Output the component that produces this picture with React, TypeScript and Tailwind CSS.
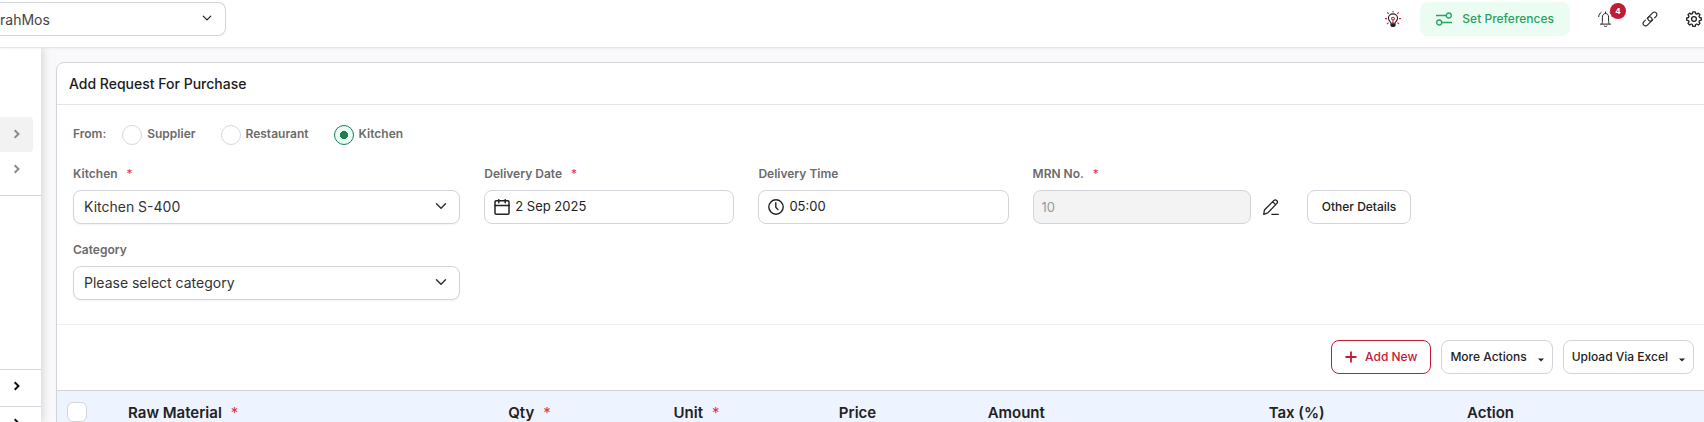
import type { ReactNode } from 'react';

const radios = [
  { id: 'supplier', label: 'Supplier' },
  { id: 'restaurant', label: 'Restaurant' },
  { id: 'kitchen', label: 'Kitchen' },
];

const columns = [
  { label: 'Raw Material', required: true, width: 'w-[23%]' },
  { label: 'Qty', required: true, width: 'w-[10%]' },
  { label: 'Unit', required: true, width: 'w-[10%]' },
  { label: 'Price', required: false, width: 'w-[9%]' },
  { label: 'Amount', required: false, width: 'w-[17%]' },
  { label: 'Tax (%)', required: false, width: 'w-[12%]' },
  { label: 'Action', required: false, width: '' },
];

function Chevron({ className }: { className: string }) {
  return (
    <svg
      className={className}
      viewBox="0 0 16 16"
      fill="none"
      stroke="currentColor"
      strokeWidth={2}
      strokeLinecap="round"
      strokeLinejoin="round"
    >
      <path d="M2 5l6 6 6-6" />
    </svg>
  );
}

function SideChevron() {
  return (
    <svg className="w-2.5 h-2.5" viewBox="0 0 10 10" fill="none" stroke="currentColor" strokeWidth={2}>
      <path d="M2.7 1.2L6.5 5 2.7 8.8" />
    </svg>
  );
}

function Caret() {
  return (
    <svg className="w-1.5 h-1.5 mt-1.5" viewBox="0 0 6 6" fill="currentColor">
      <path d="M0 1.5h6L3 4.5z" />
    </svg>
  );
}

function BulbIcon() {
  return (
    <svg className="w-4 h-4" viewBox="0 0 16 16" fill="none" strokeWidth={1.1}>
      <g stroke="#d0213d">
        <path d="M8 0v1.6M2.2 1.4l1.5 1.5M13.8 1.4l-1.5 1.5M0 7.6h2M14 7.6h2M2 13l1.5-1.4M14 13l-1.5-1.4" />
        <path d="M8 12V8.8" />
        <circle cx="8" cy="7.6" r="1.4" />
      </g>
      <path
        stroke="#222"
        d="M5.900 12.300c0-1.600-2.500-2.300-2.500-5a4.600 4.400 0 0 1 9.200 0c0 2.700-2.500 3.400-2.500 5z"
      />
      <path fill="#222" d="M5.400 12.700h5.200v1.800L9.400 16H6.600l-1.200-1.500z" />
    </svg>
  );
}

function SlidersIcon() {
  return (
    <svg className="w-4 h-4" viewBox="0 0 16 16" fill="none" stroke="currentColor" strokeWidth={1.3}>
      <circle cx="12.8" cy="4.500" r="2.5" />
      <circle cx="3.2" cy="11.500" r="2.5" />
      <path d="M0.5 4.5h9.8M5.7 11.5h9.8" strokeLinecap="round" />
    </svg>
  );
}

function BellIcon() {
  return (
    <svg className="w-4 h-4" viewBox="0 0 16 16" fill="none" stroke="currentColor" strokeLinecap="round">
      <path d="M7.5 2.2V1M2.5 13.1h10M3.7 13c.6-.7.7-1.3.7-2.5V6.2c0-2.2 1.2-3.7 3.1-3.7s3.1 1.5 3.1 3.7v4.3c0 1.2.1 1.8.7 2.5M6.1 15c.7.7 2.1.7 2.8 0" />
      <path d="M3.1 1.4C1.7 2.3.9 3.6.7 5.6M11.9 1.4c1.4.9 2.2 2.2 2.4 4.2" />
    </svg>
  );
}

function LinkIcon() {
  return (
    <svg className="w-4 h-4" viewBox="0 0 16 16" fill="none" stroke="currentColor" strokeWidth={1.1} strokeLinecap="round">
      <g transform="rotate(-45 8 8)">
        <path d="M9.500 10.500H8.600a2.500 2.500 0 0 1 0-5h5.600a2.500 2.500 0 0 1 0 5H12" />
        <path d="M6.500 5.500h.9a2.500 2.500 0 0 1 0 5H1.800a2.500 2.500 0 0 1 0-5H4" />
      </g>
    </svg>
  );
}

function GearIcon() {
  return (
    <svg className="w-4 h-4" viewBox="0 0 16 16" fill="none" stroke="currentColor" strokeWidth={1.3} strokeLinejoin="round">
      <circle cx="8" cy="8" r="2.4" />
      <path d="M6.8 .8h2.4l.4 1.8 1.2.5 1.6-1 1.6 1.6-1 1.6.5 1.2 1.8.4v2.3l-1.8.4-.5 1.2 1 1.6-1.6 1.6-1.6-1-1.2.5-.4 1.8H6.8l-.4-1.8-1.2-.5-1.6 1L2 12.4l1-1.6-.5-1.2-1.8-.4V6.9l1.8-.4L3 5.3 2 3.7l1.6-1.6 1.6 1 1.2-.5z" />
    </svg>
  );
}

function CalendarIcon() {
  return (
    <svg className="w-4 h-4" viewBox="0 0 16 16" fill="none" stroke="currentColor" strokeWidth={1.5} strokeLinecap="round">
      <rect x="1" y="1.8" width="14" height="13.4" rx="1.2" />
      <path d="M1 6.600h14M4.800 0.700v3M11.200 0.700v3" />
    </svg>
  );
}

function ClockIcon() {
  return (
    <svg className="w-4 h-4" viewBox="0 0 16 16" fill="none" stroke="currentColor" strokeWidth={1.4} strokeLinecap="round">
      <circle cx="8" cy="8" r="7.2" />
      <path d="M7.800 3.800v4.400l2.200 2.400" />
    </svg>
  );
}

function PencilIcon() {
  return (
    <svg className="w-4 h-4" viewBox="0 0 16 16" fill="none" stroke="currentColor" strokeWidth={1.3} strokeLinecap="round" strokeLinejoin="round">
      <path d="M.700 15.300l.7-4.300L10.900 1.400c1.800-1.500 4.700.9 3 3L4.800 13.900zM9.700 2.800l2.900 2.800M8.800 15.300h6.500" />
    </svg>
  );
}

function Required() {
  return <span className="ml-[9px] font-normal text-[#e5304b]">*</span>;
}

function Field({
  id,
  label,
  required,
  className,
  children,
}: {
  id: string;
  label: string;
  required?: boolean;
  className: string;
  children: ReactNode;
}) {
  return (
    <div className={className}>
      <label htmlFor={id} className="block mb-2 text-xs font-semibold text-[#6b6b6b]">
        {label}
        {required && <Required />}
      </label>
      {children}
    </div>
  );
}

function SelectBox({ id, value }: { id: string; value: string }) {
  return (
    <div className="relative">
      <select
        id={id}
        className="block w-full h-[34px] pl-2.5 pr-8 appearance-none bg-white border border-[#d3d3da] rounded-lg shadow-xs text-sm text-[#333]"
      >
        <option>{value}</option>
      </select>
      <Chevron className="absolute right-3 top-2.5 w-3.5 h-3 text-[#333] pointer-events-none" />
    </div>
  );
}

function TopBar() {
  return (
    <header className="relative z-20 flex items-start justify-between h-12 pt-0.5 pr-0.5 bg-white border-b border-[#e6e6e9] shadow-xs">
      <div className="relative w-[226px]">
        <select
          aria-label="Outlet"
          className="block w-full h-[34px] pt-0.5 appearance-none bg-white border border-l-0 border-[#d3d3da] rounded-r-lg text-sm text-[#444]"
        >
          <option>rahMos</option>
        </select>
        <Chevron className="absolute right-3.5 top-2.5 w-2.5 h-3 text-[#222] pointer-events-none" />
      </div>

      <div className="flex items-center gap-7 text-[#222]">
        <div className="flex items-center gap-[19px]">
          <button aria-label="Tips">
            <BulbIcon />
          </button>
          <button className="flex items-center gap-2.5 h-[34px] px-4 rounded-lg bg-[#ebfdf3] text-xs font-medium text-[#2aa160]">
            <SlidersIcon />
            Set Preferences
          </button>
        </div>
        <button aria-label="Notifications" className="relative">
          <BellIcon />
          <span className="absolute -top-2 left-3 flex items-center justify-center w-4 h-4 rounded-full bg-[#c01b37] text-[8px] leading-none font-bold text-white">
            4
          </span>
        </button>
        <button aria-label="Links">
          <LinkIcon />
        </button>
        <button aria-label="Settings">
          <GearIcon />
        </button>
      </div>
    </header>
  );
}

function Sidebar() {
  return (
    <aside className="relative z-10 w-[41px] shrink-0 flex flex-col bg-white shadow-[2px_0_8px_rgba(0,0,0,0.14)]">
      <div className="h-[148px] shrink-0 pt-[69px] border-b border-[#d3d3d8] text-[#8a8a8a]">
        <button aria-label="Expand" className="flex items-center w-[33px] h-[35px] pl-3 pb-0.5 rounded-r-sm bg-[#f2f2f2]">
          <SideChevron />
        </button>
        <button aria-label="Expand" className="flex items-center w-[33px] h-[35px] pl-3 pb-0.5">
          <SideChevron />
        </button>
      </div>
      <div className="h-[174px] shrink-0 border-b border-[#d3d3d8]" />
      <button aria-label="Expand" className="flex items-center h-[37px] shrink-0 pl-3 pb-1 border-b border-[#d3d3d8] text-[#111]">
        <SideChevron />
      </button>
      <button aria-label="Expand" className="flex items-center h-9 shrink-0 pl-3 pb-1 text-[#111]">
        <SideChevron />
      </button>
    </aside>
  );
}

export default function App() {
  return (
    <div className="flex flex-col h-screen overflow-hidden bg-[#f9f9fc] font-['Inter',sans-serif]">
      <TopBar />
      <div className="flex flex-1 min-h-0">
        <Sidebar />
        <main className="flex-1 min-w-0 pl-[15px] pt-3.5">
          <section className="-mr-[7px] bg-white border border-[#d3d3da] rounded-lg overflow-hidden">
            <h1 className="px-3 pt-[11px] pb-2.5 border-b border-[#e4e4e8] text-sm leading-5 font-medium text-[#1c1c1c]">
              Add Request For Purchase
            </h1>

            <form className="px-4 pt-5 pb-6 border-b border-[#f1f1f3]">
              <fieldset className="flex items-center h-5 text-xs font-semibold text-[#6b6b6b]">
                <span className="mr-4 pb-0.5">From:</span>
                {radios.map((r) => (
                  <label key={r.id} htmlFor={r.id} className="flex items-center gap-[5px] mr-[25px]">
                    <input
                      id={r.id}
                      type="radio"
                      name="from"
                      defaultChecked={r.id === 'kitchen'}
                      className="w-5 h-5 appearance-none rounded-full border border-[#d8d8dd] bg-white checked:border-[#1a804d] checked:bg-[radial-gradient(circle,#1a804d_4px,#ebfdf3_4px)]"
                    />
                    <span className="pb-0.5">{r.label}</span>
                  </label>
                ))}
              </fieldset>

              <div className="grid grid-cols-12 gap-x-6 gap-y-[18px] mt-[21px]">
                <Field id="kitchen-select" label="Kitchen" required className="col-span-3">
                  <SelectBox id="kitchen-select" value="Kitchen S-400" />
                </Field>
                <Field id="date" label="Delivery Date" required className="col-span-2">
                  <div className="flex items-center gap-[5px] h-[34px] px-[9px] border border-[#d3d3da] rounded-lg text-[#222]">
                    <CalendarIcon />
                    <input id="date" defaultValue="2 Sep 2025" className="flex-1 min-w-0 text-[13px] outline-none" />
                  </div>
                </Field>
                <Field id="time" label="Delivery Time" className="col-span-2">
                  <div className="flex items-center gap-[5px] h-[34px] px-[9px] border border-[#d3d3da] rounded-lg text-[#222]">
                    <ClockIcon />
                    <input id="time" defaultValue="05:00" className="flex-1 min-w-0 text-[13px] outline-none" />
                  </div>
                </Field>
                <Field id="mrn" label="MRN No." required className="col-span-2">
                  <div className="flex items-center gap-3 pr-1">
                    <input
                      id="mrn"
                      defaultValue="10"
                      disabled
                      className="flex-1 min-w-0 h-[34px] px-2 bg-[#f3f3f3] border border-[#d3d3da] rounded-lg text-[13px] text-[#999]"
                    />
                    <button type="button" aria-label="Edit MRN number" className="text-[#222]">
                      <PencilIcon />
                    </button>
                  </div>
                </Field>
                <div className="col-span-3 flex items-end">
                  <button
                    type="button"
                    className="h-[34px] px-3.5 border border-[#d3d3da] rounded-lg text-xs font-medium text-[#222]"
                  >
                    Other Details
                  </button>
                </div>
                <Field id="category" label="Category" className="col-span-3">
                  <SelectBox id="category" value="Please select category" />
                </Field>
              </div>
            </form>

            <div className="flex justify-end gap-2.5 px-4 pt-[15px] pb-4 text-xs font-medium text-[#222]">
              <button className="flex items-center gap-2 h-[34px] px-[13px] border border-[#c01b37] rounded-lg text-[#c01b37]">
                <svg className="w-3 h-3" viewBox="0 0 12 12" stroke="currentColor" strokeWidth={1.8}>
                  <path d="M6 0.5v11M0.5 6h11" />
                </svg>
                Add New
              </button>
              <button className="flex items-center gap-[11px] h-[34px] px-2 border border-[#d3d3da] rounded-lg">
                More Actions
                <Caret />
              </button>
              <button className="flex items-center gap-[11px] h-[34px] px-2 border border-[#d3d3da] rounded-lg">
                Upload Via Excel
                <Caret />
              </button>
            </div>

            <table className="w-full table-fixed border-t border-[#d3d3da] bg-[#edf3ff] text-[15px] text-[#222]">
              <thead>
                <tr className="h-11">
                  <th className="w-[4.3%] pl-2.5 pb-0.5 text-left">
                    <input
                      type="checkbox"
                      aria-label="Select all"
                      className="block w-5 h-5 appearance-none bg-white border border-[#d3d3da] rounded-md"
                    />
                  </th>
                  {columns.map((c) => (
                    <th key={c.label} className={`${c.width} text-left font-semibold`}>
                      {c.label}
                      {c.required && <Required />}
                    </th>
                  ))}
                </tr>
              </thead>
            </table>
          </section>
        </main>
      </div>
    </div>
  );
}
